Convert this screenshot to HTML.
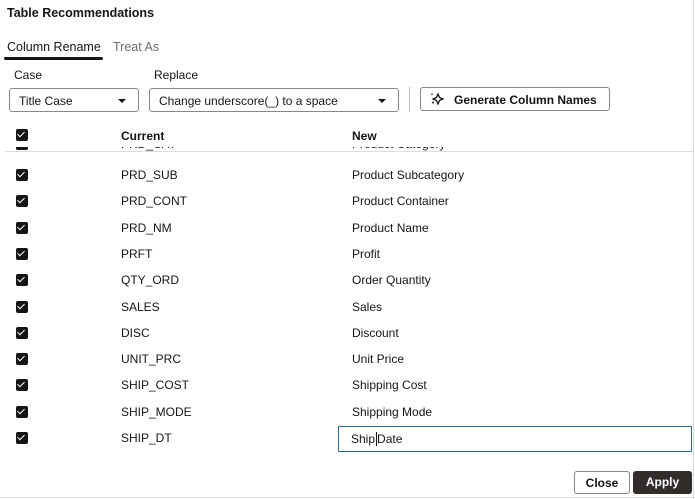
<!DOCTYPE html>
<html><head><style>
*{box-sizing:border-box}
body{margin:0;width:695px;height:499px;background:#fff;font-family:"Liberation Sans",sans-serif;font-size:12px;color:#161513;position:relative;overflow:hidden}
.a{position:absolute;white-space:nowrap}
.cb{position:absolute;left:16px;width:12px;height:12px;background:#161513;border-radius:2px}
.cb:after{content:"";position:absolute;left:3px;top:1px;width:3px;height:6px;border:solid #fff;border-width:0 1.5px 1.5px 0;transform:rotate(45deg)}
.sel{position:absolute;border:1px solid #8a8886;border-radius:3px;height:24px;padding:5px 9px;font-size:12px}
.sel:after{content:"";position:absolute;right:12px;top:10px;border:4px solid transparent;border-top:4px solid #161513;border-bottom:0}
</style></head><body>
<div class="a" style="left:7px;top:6px;font-size:12.5px;font-weight:bold">Table Recommendations</div>
<div class="a" style="left:7px;top:40px;font-size:12.5px">Column Rename</div>
<div class="a" style="left:113px;top:40px;font-size:12.5px;color:#6f6c69">Treat As</div>
<div class="a" style="left:4px;top:57px;width:99px;height:3px;background:#161513;border-radius:2px"></div>
<div class="a" style="left:14px;top:68px">Case</div>
<div class="a" style="left:154px;top:68px">Replace</div>
<div class="sel" style="left:9px;top:88px;width:130px">Title Case</div>
<div class="sel" style="left:149px;top:88px;width:250px">Change underscore(_) to a space</div>
<div class="a" style="left:409px;top:87px;width:1px;height:25px;background:#bbb"></div>
<div class="a" style="left:420px;top:87px;width:190px;height:24px;border:1px solid #8a8886;border-radius:3px;padding:5px 0 0 33px;font-weight:bold;font-size:12px;color:#161513">Generate Column Names</div>
<svg class="a" style="left:429px;top:91px" width="16" height="16" viewBox="0 0 16 16" fill="#161513"><path d="M9 3l1.5 3.5L14 8l-3.5 1.5L9 13 7.5 9.5 4 8l3.5-1.5z" fill="none" stroke="#161513" stroke-width="1.3"/><path d="M4 10l1 1.5-1 1.5-1-1.5z"/><path d="M3 2l.8 1.2L3 4.4 2.2 3.2z"/></svg>
<div class="cb" style="top:129px"></div>
<div class="a" style="left:121px;top:129px;font-weight:bold">Current</div>
<div class="a" style="left:352px;top:129px;font-weight:bold">New</div>
<div class="a" style="left:0;top:147px;width:693px;height:4px;overflow:hidden"><div class="cb" style="top:-9px"></div><div class="a" style="left:121px;top:-10px">PRD_CAT</div><div class="a" style="left:352px;top:-10px">Product Category</div></div>
<div class="a" style="left:5px;top:151px;width:688px;height:1px;background:#ddd"></div>
<div class="a" style="left:693px;top:0;width:1px;height:499px;background:#ddd"></div>
<div id="rows"></div>
<div class="a" style="left:338px;top:426px;width:354px;height:26px;border:1px solid #2b6a87;border-radius:1px"></div>
<div class="a" style="left:351px;top:432px">Ship<span style="border-left:1px solid #161513;margin-left:1px"></span>Date</div>
<div class="a" style="left:574px;top:471px;width:56px;height:23px;border:1px solid #8a8886;border-radius:3px;text-align:center;padding-top:4px;font-weight:bold">Close</div>
<div class="a" style="left:633px;top:471px;width:59px;height:23px;background:#312d2a;border-radius:3px;text-align:center;padding-top:4px;font-weight:bold;color:#fff">Apply</div>
<div class="a" style="left:0;top:497px;width:695px;height:1px;background:#ddd"></div>
<script>
var d=[["PRD_SUB","Product Subcategory"],["PRD_CONT","Product Container"],["PRD_NM","Product Name"],["PRFT","Profit"],["QTY_ORD","Order Quantity"],["SALES","Sales"],["DISC","Discount"],["UNIT_PRC","Unit Price"],["SHIP_COST","Shipping Cost"],["SHIP_MODE","Shipping Mode"],["SHIP_DT",""]];
var h="";d.forEach(function(r,i){var y=Math.round(168+i*26.3);h+='<div class="cb" style="top:'+(y+1)+'px"></div><div class="a" style="left:121px;top:'+y+'px">'+r[0]+'</div>'+(r[1]?'<div class="a" style="left:352px;top:'+y+'px">'+r[1]+'</div>':'');});
document.getElementById("rows").innerHTML=h;
</script>
</body></html>
